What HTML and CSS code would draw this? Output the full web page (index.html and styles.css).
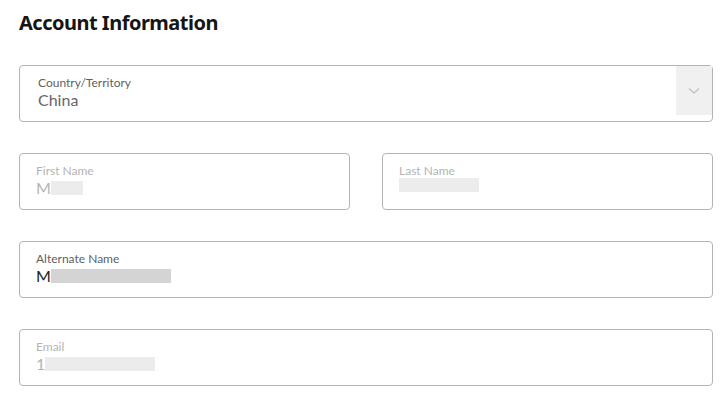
FILE: index.html
```html
<!DOCTYPE html>
<html lang="en">
  <head>
    <meta charset="UTF-8" />
    <meta name="viewport" content="width=device-width, initial-scale=1.0" />
    <title>Account Information</title>
    <link rel="stylesheet" href="styles.css">
  </head>
  <body>
    <main class="account">
      <h2 class="title">Account Information</h2>

      <div class="field select">
        <div class="field-body">
          <span class="label">Country/Territory</span>
          <span class="value">China</span>
        </div>
        <div class="chevron">
          <svg width="12" height="8" viewBox="0 0 12 8">
            <path d="M1 1.5 L6 6 L11 1.5" fill="none" stroke="#c4c4c4" stroke-width="1.4" />
          </svg>
        </div>
      </div>

      <div class="row">
        <div class="field disabled">
          <div class="field-body">
            <span class="label">First Name</span>
            <span class="value">M<span class="blur" style="width: 32px"></span></span>
          </div>
        </div>
        <div class="field disabled">
          <div class="field-body">
            <span class="label">Last Name</span>
            <span class="value"><span class="blur" style="width: 80px"></span></span>
          </div>
        </div>
      </div>

      <div class="field">
        <div class="field-body">
          <span class="label">Alternate Name</span>
          <span class="value dark">M<span class="blur mid" style="width: 120px"></span></span>
        </div>
      </div>

      <div class="field disabled">
        <div class="field-body">
          <span class="label">Email</span>
          <span class="value">1<span class="blur" style="width: 110px"></span></span>
        </div>
      </div>
    </main>
  </body>
</html>
```

FILE: styles.css
```css
body {
  margin: 0;
  font-family: Lato, "Open Sans", sans-serif;
  background-color: #ffffff;
  color: #333;
}

.account {
  padding: 12px 12px 0 19px;
  display: flex;
  flex-direction: column;
  gap: 31px;
}

.title {
  margin: 0;
  font-family: "Noto Sans", sans-serif;
  font-size: 20px;
  font-weight: bold;
  color: #161513;
  line-height: 22px;
  letter-spacing: -0.5px;
}

.row {
  display: grid;
  grid-template-columns: 1fr 1fr;
  gap: 32px;
}

.field {
  height: 57px;
  box-sizing: border-box;
  border: 1px solid #b3b3b3;
  border-radius: 4px;
  display: flex;
  background: #fff;
}

.field-body {
  flex: 1;
  display: flex;
  flex-direction: column;
  padding: 10px 16px 0 16px;
}

.select .field-body {
  padding-left: 18px;
}

.label {
  font-size: 12px;
  line-height: 14px;
  color: #5f5f5f;
}

.value {
  font-size: 16px;
  line-height: 19px;
  color: #666;
  display: flex;
  align-items: center;
}

.disabled .label,
.disabled .value {
  color: #b4b4b4;
}

.value.dark {
  color: #222;
}

.blur {
  display: inline-block;
  height: 14px;
  background: #ececec;
}

.blur.mid {
  background: #d4d4d4;
}

.chevron {
  width: 36px;
  margin: 0 0 6px 0;
  background: #f0f0f0;
  display: flex;
  align-items: center;
  justify-content: center;
}
```
